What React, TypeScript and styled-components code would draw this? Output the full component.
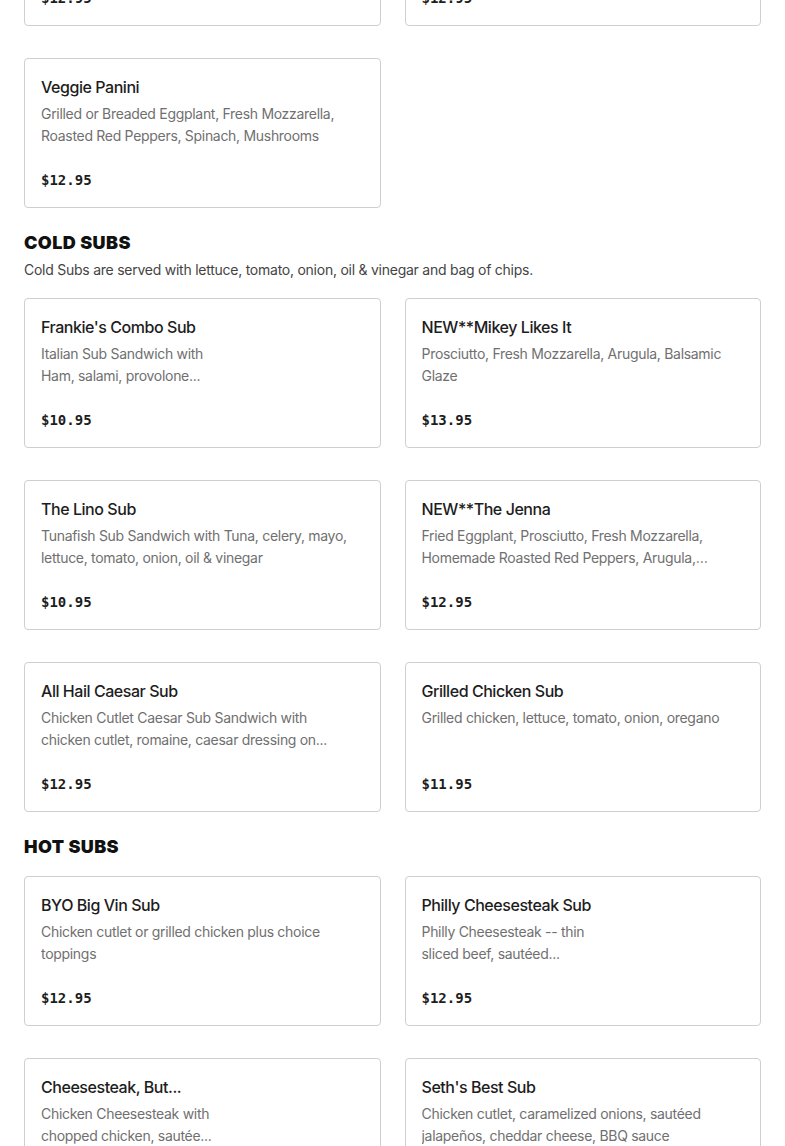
import React from "react";
import styled, { createGlobalStyle } from "styled-components";

const GlobalStyle = createGlobalStyle`
    html, body {
        margin: 0;
        padding: 0;
        background: #ffffff;
    }
    body {
        font-family: Inter, "Noto Sans", "Liberation Sans", sans-serif;
        color: #1f1f1f;
        overflow: hidden;
    }
`;

const Page = styled.div`
    padding: 0 24px;
    margin-top: -124px;
    display: flex;
    flex-direction: column;
    gap: 23px;
`;

const Section = styled.section`
    display: flex;
    flex-direction: column;
`;

const SectionTitle = styled.h2`
    margin: 0;
    font-family: Inter, "Liberation Sans", sans-serif;
    font-weight: 900;
    font-size: 18px;
    line-height: 24px;
    letter-spacing: 0.4px;
    color: #111111;
    text-transform: uppercase;
`;

const SectionNote = styled.p`
    margin: 4px 0 0;
    font-size: 14px;
    line-height: 22px;
    letter-spacing: -0.25px;
    color: #444444;
`;

const Grid = styled.div<{ $offset?: boolean }>`
    display: grid;
    grid-template-columns: 1fr 1fr;
    column-gap: 24px;
    row-gap: 32px;
    margin-top: ${(p) => (p.$offset ? "17px" : "0")};
`;

const Card = styled.div`
    border: 1px solid #cfcfcf;
    border-radius: 4px;
    padding: 16px;
    display: flex;
    flex-direction: column;
    background: #fff;
`;

const ItemName = styled.div`
    font-size: 16px;
    font-weight: 500;
    line-height: 24px;
    letter-spacing: -0.45px;
    color: #1d1d1d;
`;

const ItemDesc = styled.div`
    margin-top: 4px;
    font-size: 14px;
    line-height: 22px;
    letter-spacing: -0.3px;
    color: #707070;
    min-height: 44px;
    white-space: pre-line;
    display: -webkit-box;
    -webkit-line-clamp: 2;
    -webkit-box-orient: vertical;
    overflow: hidden;
`;

const Price = styled.div`
    margin-top: 22px;
    font-family: "DejaVu Sans Mono", "Liberation Mono", monospace;
    font-weight: bold;
    font-size: 14px;
    line-height: 22px;
    color: #1d1d1d;
`;

type Item = { name: string; desc: string; price: string };

const panini: Item[] = [
    { name: "Chicken Parm Panini", desc: "Chicken cutlet, marinara, fresh mozzarella", price: "$12.95" },
    { name: "Italian Panini", desc: "Prosciutto, fresh mozzarella, roasted peppers", price: "$12.95" },
    {
        name: "Veggie Panini",
        desc: "Grilled or Breaded Eggplant, Fresh Mozzarella, Roasted Red Peppers, Spinach, Mushrooms",
        price: "$12.95",
    },
];

const coldSubs: Item[] = [
    { name: "Frankie's Combo Sub", desc: "Italian Sub Sandwich with\nHam, salami, provolone...", price: "$10.95" },
    { name: "NEW**Mikey Likes It", desc: "Prosciutto, Fresh Mozzarella, Arugula, Balsamic Glaze", price: "$13.95" },
    { name: "The Lino Sub", desc: "Tunafish Sub Sandwich with Tuna, celery, mayo, lettuce, tomato, onion, oil & vinegar", price: "$10.95" },
    {
        name: "NEW**The Jenna",
        desc: "Fried Eggplant, Prosciutto, Fresh Mozzarella, Homemade Roasted Red Peppers, Arugula, Balsamic Glaze",
        price: "$12.95",
    },
    {
        name: "All Hail Caesar Sub",
        desc: "Chicken Cutlet Caesar Sub Sandwich with\nchicken cutlet, romaine, caesar dressing on...",
        price: "$12.95",
    },
    { name: "Grilled Chicken Sub", desc: "Grilled chicken, lettuce, tomato, onion, oregano", price: "$11.95" },
];

const hotSubs: Item[] = [
    { name: "BYO Big Vin Sub", desc: "Chicken cutlet or grilled chicken plus choice toppings", price: "$12.95" },
    { name: "Philly Cheesesteak Sub", desc: "Philly Cheesesteak -- thin\nsliced beef, sautéed...", price: "$12.95" },
    { name: "Cheesesteak, But...", desc: "Chicken Cheesesteak with\nchopped chicken, sautée...", price: "$12.95" },
    { name: "Seth's Best Sub", desc: "Chicken cutlet, caramelized onions, sautéed jalapeños, cheddar cheese, BBQ sauce", price: "$12.95" },
];

const MenuCard = ({ item }: { item: Item }) => (
    <Card>
        <ItemName>{item.name}</ItemName>
        <ItemDesc>{item.desc}</ItemDesc>
        <Price>{item.price}</Price>
    </Card>
);

const App = () => {
    return (
        <>
            <GlobalStyle />
            <Page>
                <Section>
                    <Grid>
                        {panini.map((it) => (
                            <MenuCard key={it.name} item={it} />
                        ))}
                    </Grid>
                </Section>
                <Section>
                    <SectionTitle>Cold Subs</SectionTitle>
                    <SectionNote>
                        Cold Subs are served with lettuce, tomato, onion, oil &amp; vinegar and bag of chips.
                    </SectionNote>
                    <Grid $offset>
                        {coldSubs.map((it) => (
                            <MenuCard key={it.name} item={it} />
                        ))}
                    </Grid>
                </Section>
                <Section>
                    <SectionTitle>Hot Subs</SectionTitle>
                    <Grid $offset>
                        {hotSubs.map((it) => (
                            <MenuCard key={it.name} item={it} />
                        ))}
                    </Grid>
                </Section>
            </Page>
        </>
    );
};

export default App;
